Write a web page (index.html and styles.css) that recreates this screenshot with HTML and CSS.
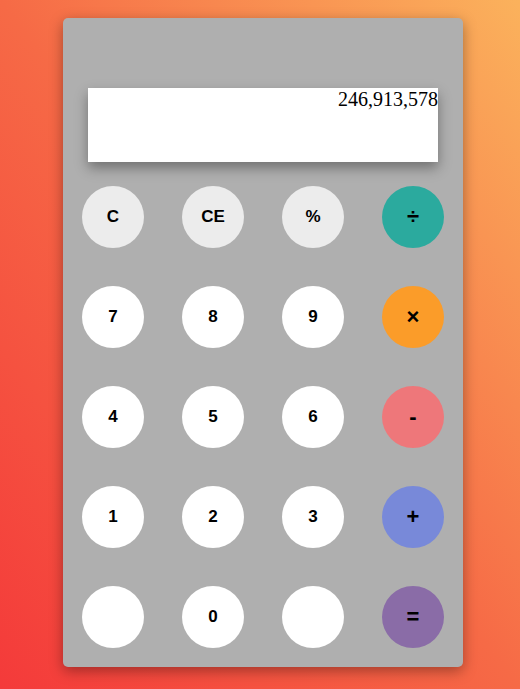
FILE: index.html
```html
<!DOCTYPE html>
<html>
<head>
<meta charset="utf-8">
<link rel="stylesheet" href="styles.css">
</head>
<body>
<div class="calc">
  <div class="display">246,913,578</div>
  <div class="keys">
    <div class="cell"><button class="key light">C</button></div>
    <div class="cell"><button class="key light">CE</button></div>
    <div class="cell"><button class="key light">%</button></div>
    <div class="cell"><button class="key op teal">÷</button></div>
    <div class="cell"><button class="key">7</button></div>
    <div class="cell"><button class="key">8</button></div>
    <div class="cell"><button class="key">9</button></div>
    <div class="cell"><button class="key op orange">×</button></div>
    <div class="cell"><button class="key">4</button></div>
    <div class="cell"><button class="key">5</button></div>
    <div class="cell"><button class="key">6</button></div>
    <div class="cell"><button class="key op pink">-</button></div>
    <div class="cell"><button class="key">1</button></div>
    <div class="cell"><button class="key">2</button></div>
    <div class="cell"><button class="key">3</button></div>
    <div class="cell"><button class="key op blue">+</button></div>
    <div class="cell"><button class="key"></button></div>
    <div class="cell"><button class="key">0</button></div>
    <div class="cell"><button class="key"></button></div>
    <div class="cell"><button class="key op purple">=</button></div>
  </div>
</div>
</body>
</html>
```
FILE: styles.css
```css
html, body {
  margin: 0;
  height: 100%;
}
body {
  background: linear-gradient(to top right, #f43a3a 0%, #f66a46 50%, #fbb25c 100%);
  overflow: hidden;
}
.calc {
  position: relative;
  width: 400px;
  height: 649px;
  margin: 18px 0 0 63px;
  background: #afafaf;
  border-radius: 5px;
  box-shadow: 0 4px 14px rgba(0, 0, 0, 0.35);
  box-sizing: border-box;
  padding-top: 70px;
  display: flex;
  flex-direction: column;
}
.display {
  width: 350px;
  height: 75px;
  margin-left: 25px;
  background: #fff;
  box-shadow: 0 6px 12px rgba(0, 0, 0, 0.35);
  font-family: "Liberation Serif", "Times New Roman", serif;
  font-size: 20px;
  line-height: 23px;
  text-align: right;
  color: #000;
}
.keys {
  display: grid;
  grid-template-columns: repeat(4, 100px);
  grid-auto-rows: 100px;
  margin-top: 5px;
}
.cell {
  display: flex;
  align-items: center;
  justify-content: center;
}
.key {
  width: 62px;
  height: 62px;
  border: none;
  border-radius: 50%;
  background: #fff;
  font-family: "Liberation Sans", Arial, sans-serif;
  font-weight: bold;
  font-size: 17px;
  color: #000;
  padding: 0;
}
.light { background: #ececec; }
.op { font-size: 22px; }
.teal { background: #2baa9e; }
.orange { background: #fb9c29; }
.pink { background: #ee777a; }
.blue { background: #7889d9; }
.purple { background: #8a6ca7; }
```
